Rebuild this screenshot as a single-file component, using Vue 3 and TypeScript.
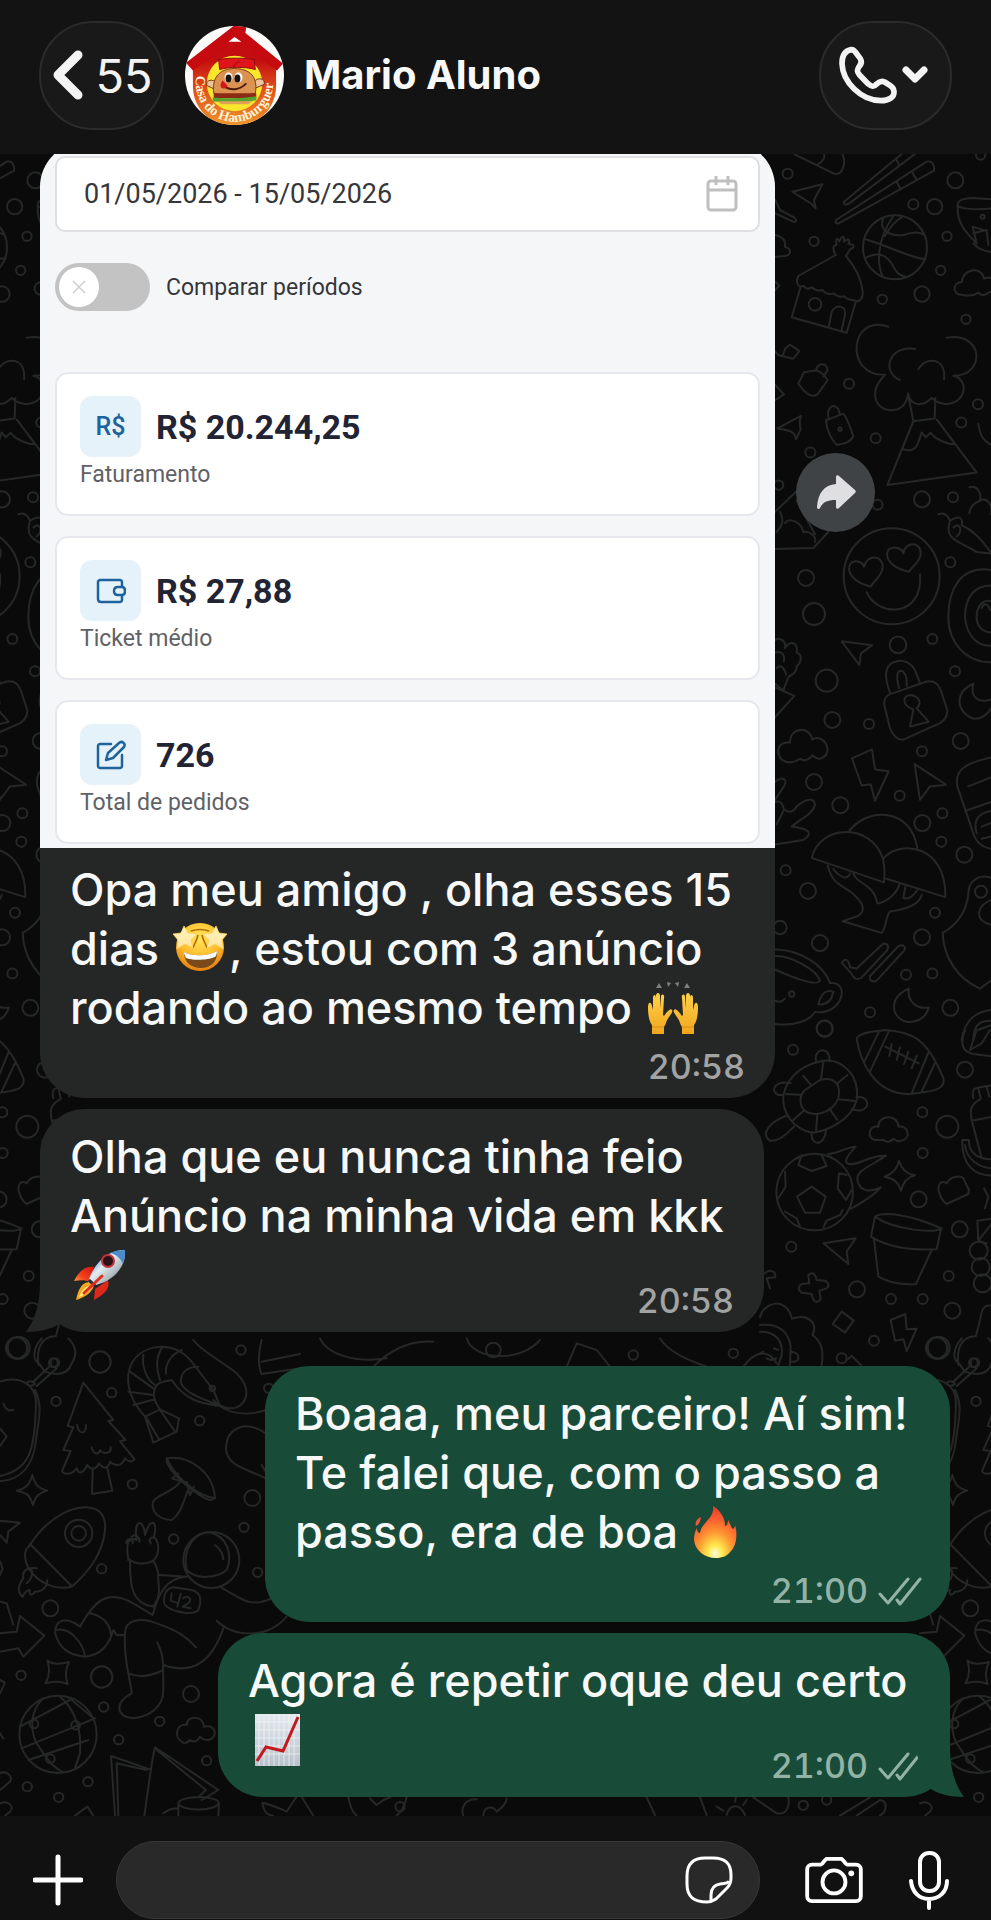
<script setup lang="ts">
import { ref } from 'vue'

interface Metric {
  icon: 'money' | 'wallet' | 'edit'
  value: string
  label: string
}

interface DoodleGroup {
  transform: string
  squash: number
  dots: [number, number, number][]
  lines: string[]
}

const contact = 'Mario Aluno'
const unread = 55
const period = ref('01/05/2026 - 15/05/2026')
const compare = ref(false)
const draft = ref('')

const metrics: Metric[] = [
  { icon: 'money', value: 'R$ 20.244,25', label: 'Faturamento' },
  { icon: 'wallet', value: 'R$ 27,88', label: 'Ticket médio' },
  { icon: 'edit', value: '726', label: 'Total de pedidos' },
]

/* The wallpaper repeats horizontally every 920px. */
const tiles = [-920, 0, 920, 1840]

const doodles: DoodleGroup[] = [
  {
    transform: 'translate(540 0) scale(.33333)',
    squash: 1,
    dots: [
      [743, 521, 15], [1120, 613, 15], [1184, 620, 23], [1246, 541, 24], [822, 724, 14], [1221, 709, 14],
      [1202, 811, 14], [1027, 898, 14], [1146, 882, 23], [1278, 958, 14], [1322, 465, 14], [1065, 742, 96],
      [825, 913, 19], [1328, 650, 6],
    ],
    lines: [
      'M762 462 L880 520 C905 530 918 495 910 470 C905 455 900 448 890 440 M832 494 C850 485 858 470 850 455',
      'M757 575 L847 553 L822 600 L827 625 L815 612 Z',
      'M1085 462 L912 605 C910 615 920 616 928 610 L1125 462 M1068 478 L1078 495',
      'M888 660 L1160 485 C1175 480 1185 495 1182 512 L896 670 C888 672 884 666 888 660 M1070 545 L1082 568 M1116 515 L1130 540',
      'M1030 655 C1015 690 1050 710 1090 705 C1120 695 1140 695 1152 705 M1060 648 C1010 720 1010 790 1028 830 M972 716 C1040 735 1100 770 1155 778 M975 775 C1020 750 1045 770 1060 800 C1070 820 1085 830 1100 830 M1085 652 C1060 665 1045 690 1035 708',
      'M887 765 L775 828 C765 850 775 862 790 858 C798 868 808 868 815 862 C825 872 840 872 848 870 C855 882 870 884 880 880 C890 890 905 892 912 888 C920 900 935 900 945 902 C960 910 970 890 968 875 C965 840 945 800 918 768',
      'M887 765 C875 745 880 735 890 735 C885 712 892 712 898 725 C905 705 915 708 912 725 C925 712 932 720 925 732 C945 732 945 742 930 748 L918 768',
      'M782 860 L755 952 L920 998 L948 903 M867 978 L875 935 C890 910 920 918 915 945 L905 990',
      'M706 600 L720 630 L762 652 C772 660 768 670 758 664 L706 640 M706 705 C740 715 735 730 735 740 C755 745 755 765 735 768 L706 770 M706 845 L718 857 L706 870',
      'M1253 620 C1250 600 1270 595 1300 594 L1390 600 M1253 620 C1250 670 1280 700 1310 730 M1256 620 C1290 632 1340 628 1380 622 M1310 730 L1298 680 L1330 690 M1300 700 L1340 690 L1345 735 M1300 730 C1320 755 1350 755 1380 760',
      'M1265 884 C1235 885 1238 845 1266 846 C1265 808 1325 795 1332 836 C1370 820 1380 870 1345 878 C1335 890 1320 885 1316 878 C1300 888 1280 888 1265 884 Z',
    ],
  },
  {
    transform: 'translate(760 340) scale(.33333 .44643)',
    squash: 0.747,
    dots: [
      [267, 98, 15], [240, 200, 5], [347, 220, 15], [151, 252, 15], [56, 325, 14], [353, 369, 15], [486, 357, 24],
      [579, 352, 15], [654, 144, 15], [604, 185, 15], [138, 533, 24], [162, 614, 33], [571, 498, 15], [517, 670, 15],
      [414, 683, 25], [200, 763, 33], [217, 851, 24], [327, 860, 15], [585, 742, 15], [602, 898, 24], [486, 921, 15],
      [162, 990, 24], [241, 1042, 24], [419, 1021, 15], [487, 1082, 24], [547, 1060, 15], [544, 1124, 15],
      [613, 1153, 24], [144, 1234, 24], [77, 1188, 15], [525, 1283, 15], [486, 1338, 24], [180, 1351, 24],
      [60, 1316, 20], [438, 1422, 15], [517, 1419, 15], [571, 1496, 24], [330, 1506, 15], [194, 1543, 24],
      [95, 1465, 8], [663, 1236, 18], [395, 529, 144],
    ],
    lines: [
      'M385 -30 C270 -60 250 80 375 78 C320 120 350 160 400 157 C430 155 440 140 444 120 C455 155 495 145 515 130 C560 160 620 135 610 100 C605 90 595 82 580 80 C680 80 670 -20 560 -5 M466 20 C390 10 360 70 420 90 M475 65 C500 35 560 40 552 88',
      'M444 120 L460 182 L524 176 L526 130 M460 182 L382 325 L650 297 L530 178 M430 245 C475 255 475 225 485 207 L497 218 L512 208 L525 218 C540 225 560 234 582 233',
      'M132 72 L170 68 C185 72 195 80 203 90 L172 122 C160 128 140 125 115 98 Z M170 68 C165 55 200 45 203 68 L190 82',
      'M198 180 L250 165 C262 175 270 195 280 215 C270 230 255 232 230 235 C212 220 200 200 198 180 M205 175 C200 150 220 140 235 155 L240 167',
      'M52 198 L123 170 C118 182 118 190 122 200 L108 222 C105 205 90 202 52 198 Z',
      'M45 25 C60 40 70 40 75 20 L90 10 L118 25 L100 42 L60 35 M45 100 L72 122 L45 135',
      'M45 385 L115 335 M60 385 C70 400 72 410 50 430 M75 410 C90 395 125 410 130 430 C150 428 170 440 165 452 M45 468 L160 466 L205 430 M110 360 L165 435',
      'M333 552 C285 545 255 520 272 500 C290 490 310 500 312 508 C320 480 370 480 368 510 C365 530 340 540 333 552 Z M447 519 C400 512 370 490 385 470 C405 458 430 470 430 478 C435 450 485 450 482 480 C478 500 455 508 447 519 Z M320 565 C350 620 490 625 480 525',
      'M655 188 C660 215 670 225 693 235 M628 330 C650 325 665 340 660 360 C640 365 630 375 628 388 M660 360 C680 350 700 370 693 390 M535 390 C555 385 565 395 570 405 C600 390 610 400 605 415 C650 430 670 455 693 475 M570 405 C550 450 600 450 650 475 L693 478 M580 420 C600 405 610 430 590 440',
      'M693 515 C600 505 565 560 565 620 C565 680 620 722 693 722 M693 550 C640 550 615 580 615 620 C620 670 660 685 693 685 M693 585 C665 580 648 600 650 625 C655 650 680 655 693 655 M665 600 C672 588 685 590 690 605',
      'M245 675 L336 684 L303 702 L298 728 Z',
      'M45 672 C60 665 80 675 75 690 C95 670 115 680 110 700 C130 705 122 725 110 730 C112 745 95 750 85 755 L70 785 L45 770 M45 700 C65 695 75 705 72 720 M50 735 C60 725 75 735 78 750 M45 778 L103 797 L45 845',
      'M372 815 C372 805 380 795 395 792 L500 765 C525 762 535 770 545 790 L562 830 C562 845 555 852 540 858 L430 895 C410 897 400 885 390 870 Z M390 790 C370 750 375 730 400 722 C430 712 455 725 465 740 L480 768 M417 780 C405 745 415 738 428 742 C440 750 440 760 440 775 M450 866 L460 828 C420 815 430 795 455 795 C480 800 485 815 470 825 L506 855 Z',
      'M640 770 C580 790 590 835 640 848 C670 850 685 835 693 825 M640 770 C630 800 655 815 693 805',
      'M65 940 C45 920 55 900 90 902 C90 865 150 865 157 895 C190 880 220 920 190 935 C180 940 165 938 158 930 C140 945 130 942 120 938 C100 948 80 948 65 940 Z',
      'M276 937 L336 917 L345 962 L386 966 L345 1032 L332 995 L305 998 Z',
      'M464 950 L558 996 L510 1000 L480 1030 Z',
      'M45 990 C70 975 85 985 70 1002 L45 1030 M45 1035 C60 1030 70 1040 72 1052 C90 1060 100 1058 110 1045 C140 1025 165 1025 165 1042 C155 1065 115 1075 95 1090 C150 1095 160 1105 130 1120 L45 1130 M72 1052 L50 1085',
      'M693 935 C600 950 585 970 592 1000 L640 1105 C650 1130 670 1135 693 1140 M625 1000 L693 980 M615 1055 L693 1035 M693 1055 C650 1060 640 1080 650 1105 M665 1090 L693 1082 M665 1117 L693 1112',
      'M155 1160 C180 1085 330 1080 368 1160 C375 1180 374 1200 372 1215 Z M265 1103 C310 1050 450 1040 472 1138 M372 1160 C420 1120 560 1130 556 1248 L372 1205 M203 1177 C215 1215 240 1220 270 1235 C310 1260 320 1275 295 1290 L248 1302 L365 1328 C380 1315 375 1295 390 1280 C450 1275 480 1260 485 1243 M220 1185 C240 1205 265 1210 270 1195 M280 1195 C290 1220 340 1215 352 1262 C380 1260 410 1240 418 1220 M436 1225 L430 1250 C450 1255 465 1240 472 1232',
      'M693 1205 C660 1195 625 1210 625 1240 C620 1280 590 1310 548 1328 C550 1380 590 1430 660 1453 L693 1435 M693 1255 C650 1265 640 1300 693 1310',
      'M245 1395 C255 1385 265 1385 270 1405 L290 1408 L370 1352 C385 1352 388 1360 380 1368 L305 1428 C290 1435 280 1430 275 1420 Z M330 1425 L415 1358 C430 1352 440 1360 432 1368 L350 1435 C338 1440 328 1435 330 1425 Z',
      'M447 1453 C390 1470 390 1510 430 1525 C470 1535 500 1515 506 1495 C470 1500 440 1480 447 1453 Z',
      'M45 1365 C120 1365 190 1400 210 1440 M45 1380 C90 1378 170 1410 180 1435 C170 1450 90 1425 45 1410 M210 1440 C245 1440 255 1460 235 1485 C215 1505 185 1508 165 1505 C150 1525 100 1538 45 1532 M175 1488 C185 1460 200 1455 220 1460 C215 1480 200 1490 175 1488 M45 1480 C60 1485 70 1480 75 1475',
      'M605 1568 C615 1520 650 1505 693 1500 M640 1568 C640 1530 665 1525 693 1525 M655 1545 L693 1535',
    ],
  },
  {
    transform: 'translate(760 1030) scale(.33333)',
    squash: 1,
    dots: [
      [99, 59, 15], [194, -5, 24], [615, 119, 24], [487, 247, 15], [562, 290, 33], [488, 369, 15], [476, 508, 24],
      [599, 598, 24], [94, 650, 15], [291, 778, 24], [393, 807, 15], [488, 807, 15], [566, 738, 15], [577, 842, 24],
      [342, 932, 15], [536, 953, 33], [656, 662, 27], [662, 711, 27], [668, 760, 27], [164, 486, 115], [245, 985, 15],
      [645, 998, 13],
    ],
    lines: [
      'M290 25 C300 5 350 5 375 0 C450 5 500 20 550 145 C560 185 500 185 445 192 C340 190 300 90 290 25 Z M357 5 L313 95 M386 5 L330 125 M505 68 L456 188 M527 95 L485 185 M376 50 L476 100 M395 42 L388 78 M420 52 L410 90 M445 65 L432 102 M470 78 L455 115',
      'M190 92 C250 85 300 140 290 210 C275 270 200 305 155 308 C100 295 65 250 70 195 C85 130 140 100 190 92 Z M180 150 C220 140 245 160 235 205 C220 240 185 258 150 250 C115 240 115 200 135 180 Z M190 95 L183 148 M130 138 L155 168 M78 192 L122 194 M100 270 L130 243 M168 305 L172 253 M232 270 L208 236 M285 213 L236 208 M262 135 L230 162',
      'M168 92 C160 50 215 50 208 94 M92 160 C50 150 25 180 55 195 L70 195 M78 258 C30 275 0 310 30 332 C60 335 80 310 102 290 M155 306 C150 350 195 350 198 300 M290 202 C325 195 335 235 300 242 L275 238',
      'M345 330 C320 325 325 285 355 290 C355 255 412 250 416 290 C445 285 455 325 425 332 C415 338 405 330 400 326 C390 340 375 335 370 330 Z',
      'M205 372 C240 370 260 350 287 350 C255 385 245 405 280 402 C310 398 330 375 378 377 C330 410 290 420 292 450 C300 490 335 485 362 472 C340 500 300 520 272 537',
      'M155 470 L197 500 L180 548 L135 548 L111 500 Z M125 375 L115 405 L155 423 L200 408 L185 375 M75 425 L77 470 L55 505 M260 435 L237 430 L233 475 L258 510 L275 480 M75 545 L110 565 L120 590 M190 592 L200 572 L240 555 L248 540',
      'M417 392 C425 420 440 432 465 436 C440 442 428 460 423 482 C415 455 400 445 374 440 C400 430 412 415 417 392 Z',
      'M535 480 C535 460 545 450 560 460 C570 440 600 435 610 445 L627 480 L625 492 L560 522 C548 515 540 500 535 480 Z',
      'M345 560 C370 545 440 550 545 595 C520 610 400 600 345 560 Z M345 560 L333 620 C380 650 450 662 530 658 L543 597 M342 628 L355 740 C390 760 430 765 468 762 L515 660',
      'M190 640 L287 625 L260 665 L265 702 Z',
      'M148 760 L145 735 C155 725 165 728 170 750 L195 752 C208 760 208 768 200 775 L178 782 L182 808 C172 820 160 820 155 792 L125 788 C112 778 115 768 125 762 Z',
      'M245 845 L281 872 L255 908 L218 882 Z',
      'M392 870 L436 852 L440 898 L470 896 L440 963 L430 928 L405 932 Z',
      'M0 862 C5 825 75 790 96 866 C140 850 175 875 158 915 C190 940 190 970 185 1005 M0 885 C50 880 85 900 92 950 L90 1005 M0 905 C45 905 70 930 65 975 L55 1005 M95 965 C125 970 120 1000 92 995 M20 985 C30 992 40 990 48 985 M0 970 L10 965 M42 955 L55 960 M260 990 L275 978 L303 1005',
      'M615 0 C600 40 605 65 640 72 L700 80 M650 0 L630 60 L665 40 L690 0 M640 205 C635 180 640 175 660 172 L700 165 M655 175 L662 205 M680 170 L688 200 M660 208 C630 225 630 240 635 270 L665 385 M635 272 L700 260 M607 330 L627 330 C625 365 650 390 700 388 M607 330 C605 400 640 440 700 436 M615 345 C620 390 660 415 700 415',
      'M700 565 L652 572 L655 632 L700 575 M655 632 L680 640 M700 828 C670 820 665 840 660 870 L648 918 C600 920 590 960 595 1005 M672 475 L685 500 L675 535 M14 730 C30 715 50 725 45 742 L20 745 L30 775',
    ],
  },
  {
    transform: 'translate(0 1340) scale(.33333)',
    squash: 1,
    dots: [
      [50, 24, 32], [300, 66, 32], [335, 158, 14], [168, 184, 14], [397, 433, 14], [599, 242, 14], [723, 30, 14],
      [757, 474, 24], [732, 562, 14], [773, 697, 14], [521, 597, 14], [305, 686, 14], [151, 805, 24], [63, 1006, 14],
      [305, 1011, 32], [311, 1101, 14], [479, 1144, 14], [573, 1062, 24], [356, 1199, 14], [620, 1262, 14],
      [82, 1340, 14], [176, 1372, 14], [264, 1325, 14], [160, 68, 13], [806, 145, 14], [236, 580, 41], [236, 580, 22],
      [634, 660, 84], [174, 1183, 116], [102, 1152, 13], [227, 1156, 13], [151, 1256, 13], [637, 145, 8],
      [1200, 1400, 14], [1480, 30, 22], [1900, 45, 14], [2410, 1396, 14], [2200, 40, 14], [2480, 1380, 14],
    ],
    lines: [
      'M125 -5 C95 30 100 60 115 68 L135 95 C180 110 205 100 215 70 C235 40 225 15 205 -5 M150 78 L100 125 M170 85 L110 138 M80 130 C85 120 100 122 105 132 C95 140 85 138 80 130',
      'M0 125 C60 105 110 135 108 190 C105 330 90 390 0 408 M105 150 C130 200 115 240 108 300 C100 380 60 420 0 424 M10 190 C20 215 30 212 40 210 M0 265 L20 290 L0 318',
      'M250 128 L340 240 L325 243 L377 300 L360 304 L404 358 C395 368 385 365 375 355 C365 380 345 380 330 365 C325 385 310 390 298 370 C290 385 275 395 262 375 C250 400 235 405 230 385 C215 405 190 405 186 393 L212 333 L190 330 L220 262 L203 258 Z M232 255 C235 285 260 285 258 255 M275 322 C280 345 298 345 300 330 C310 345 335 340 332 322 M278 392 L276 462 L337 452 L322 385',
      'M640 150 L575 65 C520 0 430 10 395 70 C375 110 380 170 435 230 L480 208 C450 170 460 130 490 125 L515 120 M515 120 C555 180 600 190 660 198 L640 150 M595 80 C565 80 545 90 542 125 C550 155 600 175 655 195 M545 30 C510 45 495 75 498 100 M485 25 C465 55 470 90 480 120 M430 45 C425 80 440 120 465 135 M390 95 L460 145 M385 155 L460 165 M400 195 L465 178 M435 230 L460 308 L530 275 L537 235 L480 208 M440 235 L478 300 M480 210 L525 275',
      'M580 0 C600 30 660 60 710 100 C760 150 740 205 690 205 C670 205 650 190 640 180 M655 195 C690 220 740 230 797 210 M785 0 C775 40 775 80 785 102 L900 85 M785 65 L900 42',
      'M797 280 C740 240 680 260 678 325 C680 380 740 385 797 415 M785 375 L797 395',
      'M97 405 C105 435 115 445 142 452 C115 460 105 470 99 496 C90 465 80 458 50 452 C80 445 90 430 97 405 Z',
      'M500 355 C560 345 640 390 645 475 C600 470 530 420 500 355 Z M500 355 C495 395 610 480 630 480 L645 475 M535 400 L517 415 L545 425 M560 425 L570 465 L582 440 M540 425 C520 460 450 465 458 500 C465 535 500 540 515 540 C545 520 550 480 565 450',
      'M90 615 C130 550 200 500 260 502 C310 505 325 540 310 600 C295 660 250 710 215 740 C130 760 60 680 78 630 Z M90 612 L215 738 M110 685 C85 680 65 690 70 715 C50 740 55 760 68 770 C75 755 80 750 90 750 C85 765 95 770 105 755 C125 755 140 745 142 720 M95 690 C100 710 90 720 80 730',
      'M0 542 L60 548 L25 575 L20 608 L0 585 M0 665 L8 685 L0 705 M0 785 L20 790 L40 855 M0 880 L50 875 L60 828 L133 887 L70 950 L55 925 L0 935 M0 1020 L15 1028 L0 1060 M0 1180 L10 1195',
      'M385 660 C375 600 390 590 410 600 C400 540 430 530 435 585 C450 530 475 540 462 590 C480 610 480 650 455 665 C430 675 400 672 385 655 M378 608 C385 590 400 600 398 610 M395 590 C405 580 420 590 418 605 M452 610 C442 595 460 585 470 600 M390 665 C390 740 395 790 460 800 C490 760 470 720 475 700 C470 680 465 670 460 665 M478 705 L560 710 M660 740 C740 790 760 800 815 775',
      'M555 710 C500 715 475 760 458 825 L400 790 C330 750 290 770 240 860 C200 830 165 835 165 880 C180 930 210 945 255 950 C300 945 325 920 340 870 L350 885 L372 885 M168 870 C210 860 250 910 255 950 M270 820 C320 830 340 870 330 900 M375 880 C375 840 420 830 470 850 C530 870 560 890 588 922 M375 880 C370 960 390 1010 395 1060 C340 1090 350 1130 400 1135 C450 1130 490 1100 490 1050 C490 960 490 940 472 908 M385 1000 C420 1015 460 1005 490 990 M490 975 C590 1010 640 950 670 865 M650 842 C700 890 800 900 860 830',
      'M560 690 C545 620 590 575 630 577 C680 590 700 640 680 690 C650 715 590 720 560 690 M645 615 C660 625 668 640 670 658 M520 742 C490 745 485 790 500 800 C530 820 580 825 595 810 C610 770 595 755 575 750 Z M515 760 L512 782 L535 790 M542 762 L532 800 M550 775 C560 765 580 775 565 790 L548 800 L572 805',
      'M142 962 C160 975 185 972 207 966 C195 990 195 1010 203 1032 C180 1022 160 1025 137 1029 C148 1010 150 985 142 962 Z',
      'M60 1160 L210 1080 M65 1225 L285 1135 M85 1260 L265 1200 M130 1075 C90 1110 85 1180 120 1225 C150 1270 165 1285 190 1297 M180 1070 C230 1110 245 1180 240 1240 L225 1285 M215 1080 L275 1130',
      'M545 1205 C520 1190 530 1150 560 1155 C560 1125 610 1125 612 1160 C650 1150 655 1195 625 1200 C610 1202 605 1195 600 1190 C590 1210 575 1205 570 1200 C560 1212 550 1210 545 1205 Z',
      'M345 1427 L333 1248 L450 1288 M355 1427 L350 1270 L440 1290 M433 1427 C440 1380 455 1260 465 1222 L655 1350 L605 1380 M470 1230 L618 1350 L595 1372 M535 1427 L535 1390 C540 1365 655 1365 657 1390 L655 1427 M535 1390 C545 1415 645 1415 655 1390 M490 1420 C500 1412 520 1405 535 1405 M225 1427 L262 1400 L280 1427 M0 1390 C25 1380 45 1400 30 1415 L15 1427 M0 1300 C20 1290 40 1310 30 1325 L0 1350',
      'M787 1388 C820 1395 840 1405 860 1415 L890 1370 M787 1388 C790 1410 800 1427 820 1427 M905 1370 L940 1427 M1045 1370 C1050 1400 1060 1420 1070 1427 M1110 1375 L1130 1395 L1150 1380 L1170 1372 M1220 1370 C1215 1400 1200 1420 1190 1427 M1390 1427 C1380 1400 1400 1375 1430 1378 M1450 1427 C1450 1400 1480 1395 1490 1415 C1510 1400 1520 1390 1520 1375',
      'M960 -5 C980 40 1060 70 1160 55 M1120 80 C1170 30 1230 0 1300 5 M1400 -5 C1420 60 1560 70 1620 0 M1700 80 L1730 10 L1790 30 L1830 80 M1980 -5 C2000 30 2060 60 2120 80 M2230 80 C2260 40 2300 20 2330 70',
      'M1940 1372 L1965 1425 M2100 1372 L2120 1425 M2180 1425 C2190 1390 2220 1390 2235 1425 M2150 1400 L2170 1412 M2205 1385 L2208 1370 M2230 1395 L2240 1380 M2260 1372 L2330 1420 C2360 1425 2370 1400 2365 1372 M2520 1427 L2610 1372 M2570 1427 L2640 1380 C2660 1380 2665 1410 2640 1427',
    ],
  },
]
</script>

<template>
  <div class="phone">
    <!-- Shared emoji and icon drawings -->
    <svg class="sprite" aria-hidden="true">
      <defs>
        <radialGradient id="gFace" cx=".5" cy=".3" r=".75">
          <stop offset="0" stop-color="#ffe65a" /><stop offset=".55" stop-color="#fdbd2c" /><stop offset="1" stop-color="#e2760a" />
        </radialGradient>
        <linearGradient id="gStar" x1="0" y1="0" x2="0" y2="1">
          <stop offset="0" stop-color="#fff6bd" /><stop offset="1" stop-color="#ffe3a0" />
        </linearGradient>
        <linearGradient id="gHand" x1="0" y1="0" x2="0" y2="1">
          <stop offset="0" stop-color="#ffd24a" /><stop offset="1" stop-color="#f0a51d" />
        </linearGradient>
        <linearGradient id="gBody" x1="0" y1="0" x2="1" y2="1">
          <stop offset=".15" stop-color="#3f84cc" /><stop offset=".42" stop-color="#e3edf2" /><stop offset=".68" stop-color="#aeb9bd" /><stop offset="1" stop-color="#55666f" />
        </linearGradient>
        <linearGradient id="gFin" x1="1" y1="0" x2="0" y2="1">
          <stop offset="0" stop-color="#d11414" /><stop offset=".6" stop-color="#f0411d" /><stop offset="1" stop-color="#ff9a3a" />
        </linearGradient>
        <radialGradient id="gFire" cx=".5" cy=".92" r=".85">
          <stop offset="0" stop-color="#fffbe0" /><stop offset=".2" stop-color="#ffe94e" /><stop offset=".48" stop-color="#ff9a32" /><stop offset=".8" stop-color="#fb5b30" /><stop offset="1" stop-color="#ea4429" />
        </radialGradient>
        <linearGradient id="gSheet" x1="0" y1="0" x2="0" y2="1">
          <stop offset="0" stop-color="#e4e9ee" /><stop offset="1" stop-color="#b9c2cb" />
        </linearGradient>
      </defs>

      <symbol id="emoji-star-struck" viewBox="0 0 56 52">
        <circle cx="28" cy="24" r="24" fill="url(#gFace)" />
        <path d="M19 8q9-3 18 0M26 12c-1 6-4 9-5 13M30 12c1 6 4 9 5 13" stroke="#b06a0c" stroke-width="1.6" fill="none" />
        <path d="M12 29c8 5 25 4 33-1 1 11-7 17-16 17S12 40 12 29Z" fill="#7a4a1b" />
        <path d="M12 29c8 5 25 4 33-1 0 3-1 5-2 6-7 3-22 4-29 1-1-2-2-4-2-6Z" fill="#fff" />
        <path d="M12 3l4 7 9 1-6 6 2 8-8-4-8 5 1-9-5-6 8-1Z" fill="url(#gStar)" stroke="#ffd25e" stroke-width=".8" />
        <path d="M44 3l-4 7-9 1 6 6-2 8 8-4 8 5-1-9 5-6-8-1Z" fill="url(#gStar)" stroke="#ffd25e" stroke-width=".8" />
      </symbol>

      <symbol id="emoji-hands" viewBox="0 0 56 52">
        <g fill="url(#gHand)">
          <path d="M7 52V43C4 39 3 33 3 25c0-5 3-6 4-1l1 4V16c0-4 3-4 3 0v10-12c0-4 4-4 4 0v12l1-11c0-4 4-3 3 1l-1 17 1 1c4-6 7-8 8-6 2 2-5 8-6 13-1 3-2 3-2 5v6Z" />
          <path d="M49 52V43c3-4 4-10 4-18 0-5-3-6-4-1l-1 4V16c0-4-3-4-3 0v10-12c0-4-4-4-4 0v12l-1-11c0-4-4-3-3 1l1 17-1 1c-4-6-7-8-8-6-2 2 5 8 6 13 1 3 2 3 2 5v6Z" />
        </g>
        <path d="M7 45h12M37 45h12" stroke="#d98d12" stroke-width="1" />
        <path d="M14 1l-3 5h6ZM22 0l1 5 3-4ZM34 0l-1 5-3-4ZM42 1l3 5h-6Z" fill="#7d7f80" />
      </symbol>

      <symbol id="emoji-rocket" viewBox="0 0 56 52">
        <path d="M23 18C14 17 8 22 3 32c7-1 12-1 16 1Z" fill="url(#gFin)" />
        <path d="M37 31c3 9-5 15-14 20l1-11Z" fill="#e0271b" />
        <path d="M18 33C9 34 7 43 5 51c7-2 15-6 18-14Z" fill="#f7a824" />
        <path d="M17 37c-5 3-7 6-9 11 6-2 9-5 12-9Z" fill="#fff27d" />
        <path d="M54 1C40 1 26 9 18 30l7 6C44 31 55 17 54 1Z" fill="url(#gBody)" />
        <path d="M54 1C48 1 43 2 39 4c6 1 11 6 13 11 2-4 2-9 2-14Z" fill="#4b8dcc" />
        <circle cx="37" cy="12" r="7" fill="#c5313a" />
        <circle cx="37" cy="12" r="5" fill="#2a1118" />
        <path d="M18 31l6 6" stroke="#1c2f42" stroke-width="3" />
        <path d="M31 27L13 44" stroke="#e52a1f" stroke-width="3" stroke-linecap="round" />
      </symbol>

      <symbol id="emoji-fire" viewBox="0 0 56 52">
        <path d="M22 0c8 5 12 12 12 20 2 0 3-3 3-6 3 5 3 8 5 9 1-1 2-2 2-4 3 10 1 21-4 26-4 5-8 7-15 7C13 52 4 44 3 34c0-5 1-9 3-12 0 3 1 5 3 5 1-6 4-8 7-12 4-4 7-9 6-15Z" fill="url(#gFire)" />
        <path d="M10 11c-5 3-6 5-5 9 4-2 4-5 5-9Z" fill="#f0583b" />
      </symbol>

      <symbol id="emoji-chart" viewBox="0 0 56 52">
        <path d="M6 0h45v52H6Z" fill="url(#gSheet)" />
        <path d="M10 0v52M15 0v52M20 0v52M25 0v52M30 0v52M35 0v52M40 0v52M45 0v52M6 8h45M6 16h45M6 24h45M6 32h45M6 40h45" stroke="#f4f7f9" stroke-width=".7" />
        <path d="M8 47l9-14 17 4L49 3" fill="none" stroke="#c3181d" stroke-width="3" />
      </symbol>

      <symbol id="icon-ticks" viewBox="0 0 44 30">
        <path d="M2 18l8 9L30 3M19 24l3 4L42 3" fill="none" stroke="currentColor" stroke-width="3" stroke-linecap="round" stroke-linejoin="round" />
      </symbol>

      <symbol id="icon-tail" viewBox="0 0 50 50">
        <path d="M14 0C14 22 9 38 0 50C14 50 26 47 35 41L50 0Z" fill="currentColor" />
      </symbol>
    </svg>

    <header class="topbar">
      <button class="pill back" type="button" aria-label="Voltar">
        <svg width="32" height="52" viewBox="0 0 32 52" aria-hidden="true">
          <path d="M26 6L6 26l20 20" fill="none" stroke="#f3f3f3" stroke-width="9" stroke-linecap="round" stroke-linejoin="round" />
        </svg>
        <span>{{ unread }}</span>
      </button>

      <svg class="avatar" viewBox="0 0 100 100" role="img" aria-label="Casa do Hamburguer">
        <defs>
          <clipPath id="avatarClip"><circle cx="50" cy="50" r="50" /></clipPath>
          <linearGradient id="gRing" x1="0" y1="0" x2="0" y2="1">
            <stop offset=".25" stop-color="#c30d10" /><stop offset=".55" stop-color="#dd4a1a" /><stop offset="1" stop-color="#f0962b" />
          </linearGradient>
          <path id="ringText" d="M12 49A39 39 0 1 0 88 49" />
        </defs>
        <g clip-path="url(#avatarClip)">
          <rect width="100" height="100" fill="#fdfcfb" />
          <path d="M8 44L50 12 92 44V60C92 84 74 101 50 101S8 84 8 60Z" fill="url(#gRing)" />
          <path d="M1 37L49 0h13l-1 7 38 31-6 7-8-5-35-26L15 40l-7 5Z" fill="#c50b10" />
          <path d="M44 16l6-5 7 5Z" fill="#fff" />
          <circle cx="50" cy="58" r="28" fill="#fae72c" />
          <path d="M31 56c-6-3-10 0-9 4l10 5M71 55c6-4 10 0 9 4l-12 5" fill="#f0c49a" stroke="#6b3a1c" stroke-width="1" />
          <path d="M29 68c-2-15 5-25 21-25s24 9 21 25c-12 3-30 3-42 0Z" fill="#dc9250" stroke="#7a3e16" stroke-width="1" />
          <path d="M34 34c8-2 28-2 36 0l1 10c-10-3-26-3-36 0Z" fill="#e0141a" stroke="#8b0b0e" stroke-width="1" />
          <path d="M49 42c1-4 3-5 6-6" fill="none" stroke="#8b0b0e" stroke-width="1" />
          <ellipse cx="44" cy="52" rx="4" ry="5" fill="#fff" /><ellipse cx="54" cy="52" rx="4" ry="5" fill="#fff" />
          <ellipse cx="44" cy="53" rx="3" ry="4" fill="#161313" /><ellipse cx="53" cy="53" rx="3" ry="4" fill="#161313" />
          <path d="M38 60c8 6 17 5 24-2" fill="none" stroke="#4d1c0c" stroke-width="2" />
          <path d="M38 55c-4 5-2 9 3 8l2-3Z" fill="#d8151d" />
          <path d="M29 68h43v5H29Z" fill="#8d2a16" />
          <path d="M28 72c12 2 32 1 44-1v4c-12 3-32 3-44 1Z" fill="#55a331" />
          <path d="M32 76h36l-4 3H37Z" fill="#e2a058" />
        </g>
        <text class="ring"><textPath href="#ringText" startOffset="1">Casa do Hamburguer</textPath></text>
      </svg>

      <h1 class="name">{{ contact }}</h1>

      <button class="pill call" type="button" aria-label="Ligar">
        <svg width="60" height="60" viewBox="893 139 180 180" aria-hidden="true">
          <path d="M933 153C914 156 905 172 905 195C907 250 962 306 1022 306C1047 306 1062 294 1061 280C1061 270 1058 266 1050 261L1033 250C1023 245 1017 248 1009 256C1000 266 995 264 983 255L957 228C949 218 950 215 956 204C965 195 965 188 960 180L945 160C941 155 938 153 933 153Z" fill="none" stroke="#f3f3f3" stroke-width="17" stroke-linejoin="round" />
        </svg>
        <svg width="26" height="20" viewBox="0 0 26 20" aria-hidden="true">
          <path d="M4 5l9 9 9-9" fill="none" stroke="#f3f3f3" stroke-width="7" stroke-linecap="round" stroke-linejoin="round" />
        </svg>
      </button>
    </header>

    <main class="chat">
      <svg class="wallpaper" aria-hidden="true">
        <defs>
          <g id="doodles" fill="none" stroke="#262727" stroke-width="2" stroke-linejoin="round" stroke-linecap="round">
            <g v-for="(g, gi) in doodles" :key="gi" :transform="g.transform">
              <ellipse v-for="(d, di) in g.dots" :key="'d' + di" :cx="d[0]" :cy="d[1]" :rx="d[2]" :ry="d[2] * g.squash" vector-effect="non-scaling-stroke" />
              <path v-for="(p, pi) in g.lines" :key="'p' + pi" :d="p" vector-effect="non-scaling-stroke" />
            </g>
          </g>
        </defs>
        <use v-for="x in tiles" :key="x" href="#doodles" :x="x" y="-154" />
      </svg>

      <article class="bubble received with-media">
        <div class="media-wrap">
          <section class="media">
            <div class="date">
              <input v-model="period" type="text" aria-label="Período" readonly />
              <svg width="32" height="36" viewBox="0 0 32 36" fill="none" stroke="#bfbfbf" stroke-width="3" aria-hidden="true">
                <rect x="2" y="5" width="28" height="29" rx="3" /><path d="M2 14h28M10 0v9M22 0v9" />
              </svg>
            </div>
            <label class="compare">
              <span class="switch">
                <input v-model="compare" type="checkbox" />
                <svg viewBox="0 0 14 14" aria-hidden="true"><path d="M1 1l12 12M13 1L1 13" stroke="#cfcfcf" stroke-width="1.5" /></svg>
              </span>
              Comparar períodos
            </label>
            <div class="cards">
              <div v-for="m in metrics" :key="m.label" class="card">
                <div class="figure">
                  <span class="tile">
                    <span v-if="m.icon === 'money'">R$</span>
                    <svg v-else-if="m.icon === 'wallet'" width="30" height="26" viewBox="0 0 30 26" fill="none" stroke="#1f639c" stroke-width="2.5" stroke-linejoin="round" aria-hidden="true">
                      <path d="M26 8V4c0-1-1-2-2-2H4C3 2 2 3 2 4v17c0 2 1 3 3 3h19c1 0 2-1 2-2v-4" />
                      <path d="M22 9h4c2 0 3 2 3 4s-1 4-3 4h-4c-3 0-4-2-4-4s1-4 4-4Z" />
                    </svg>
                    <svg v-else width="30" height="30" viewBox="0 0 30 30" fill="none" stroke="#1f639c" stroke-width="2.5" stroke-linejoin="round" stroke-linecap="round" aria-hidden="true">
                      <path d="M15 4H4C3 4 2 5 2 6v20c0 1 1 2 2 2h20c1 0 2-1 2-2V15" />
                      <path d="M10 20l2-7L23 3c3-3 7 1 5 4L17 18Z" />
                    </svg>
                  </span>
                  <strong>{{ m.value }}</strong>
                </div>
                <span class="caption">{{ m.label }}</span>
              </div>
            </div>
          </section>
          <button class="forward" type="button" aria-label="Encaminhar">
            <svg width="40" height="36" viewBox="0 0 40 36" aria-hidden="true">
              <path d="M20 2c0-2 2-2 3-1l16 14c1 1 1 2 0 3L23 33c-1 1-3 1-3-1v-7C11 25 7 27 4 33c-1 2-3 1-3-1C2 18 8 10 20 9Z" fill="#dfdfe1" />
            </svg>
          </button>
        </div>
        <p>Opa meu amigo , olha esses 15 dias <svg class="emoji" role="img" aria-label="🤩"><use href="#emoji-star-struck" /></svg>, estou com 3 anúncio rodando ao mesmo tempo <svg class="emoji" role="img" aria-label="🙌"><use href="#emoji-hands" /></svg></p>
        <div class="meta"><time>20:58</time></div>
      </article>

      <article class="bubble received second">
        <svg class="tail" aria-hidden="true"><use href="#icon-tail" /></svg>
        <p>Olha que eu nunca tinha feio Anúncio na minha vida em kkk <svg class="emoji" role="img" aria-label="🚀"><use href="#emoji-rocket" /></svg></p>
        <div class="meta tucked"><time>20:58</time></div>
      </article>

      <article class="bubble sent third">
        <p>Boaaa, meu parceiro! Aí sim! Te falei que, com o passo a passo, era de boa <svg class="emoji" role="img" aria-label="🔥"><use href="#emoji-fire" /></svg></p>
        <div class="meta"><time>21:00</time><svg class="ticks" role="img" aria-label="Entregue"><use href="#icon-ticks" /></svg></div>
      </article>

      <article class="bubble sent fourth">
        <svg class="tail" aria-hidden="true"><use href="#icon-tail" /></svg>
        <p>Agora é repetir oque deu certo <svg class="emoji" role="img" aria-label="📈"><use href="#emoji-chart" /></svg></p>
        <div class="meta tucked"><time>21:00</time><svg class="ticks" role="img" aria-label="Entregue"><use href="#icon-ticks" /></svg></div>
      </article>
    </main>

    <footer class="composer">
      <button type="button" aria-label="Anexar">
        <svg width="50" height="52" viewBox="0 0 50 52" aria-hidden="true"><path d="M25 3v46M2 26h46" stroke="#fff" stroke-width="5" stroke-linecap="round" /></svg>
      </button>
      <div class="field">
        <input v-model="draft" type="text" aria-label="Mensagem" />
        <button type="button" aria-label="Figurinhas">
          <svg width="48" height="48" viewBox="0 0 48 48" fill="none" stroke="#fff" stroke-width="3" stroke-linejoin="round" aria-hidden="true">
            <path d="M20 2h8c13 0 18 6 18 17v3c0 4-1 7-4 10L31 43c-3 2-6 3-9 3C8 46 2 40 2 28v-8C2 8 8 2 20 2Z" />
            <path d="M26 46v-7c0-7 3-10 9-11 4-1 8 0 9-3" />
          </svg>
        </button>
      </div>
      <div class="actions">
        <button type="button" aria-label="Câmera">
          <svg width="58" height="46" viewBox="0 0 60 48" fill="none" stroke="#fff" stroke-width="4" stroke-linejoin="round" aria-hidden="true">
            <path d="M7 8h9c2 0 4-5 6-6h16c2 1 4 6 6 6h9c3 0 5 2 5 5v28c0 3-2 5-5 5H7c-3 0-5-2-5-5V13c0-3 2-5 5-5Z" />
            <circle cx="30" cy="26" r="12" /><circle cx="48" cy="17" r="3" fill="#fff" stroke="none" />
          </svg>
        </button>
        <button type="button" aria-label="Gravar áudio">
          <svg width="40" height="60" viewBox="0 0 40 60" fill="none" stroke="#fff" stroke-width="4" stroke-linecap="round" aria-hidden="true">
            <rect x="11" y="3" width="19" height="38" rx="9" /><path d="M2 31c1 11 8 18 18 18s18-7 18-18M20 50v8" />
          </svg>
        </button>
      </div>
    </footer>
  </div>
</template>

<style>
body {
  background: #0a0a0a;
}
</style>

<style scoped>
.phone {
  display: flex;
  flex-direction: column;
  min-height: 100vh;
  font-family: Inter, 'Liberation Sans', sans-serif;
  color: #f7f8f8;
  overflow: hidden;
}

.sprite {
  position: absolute;
  width: 0;
  height: 0;
}

button {
  padding: 0;
  border: 0;
  background: none;
  color: inherit;
  font: inherit;
  cursor: pointer;
}

button svg {
  display: block;
}

.topbar {
  display: flex;
  align-items: center;
  box-sizing: border-box;
  height: 154px;
  padding: 0 39px 4px;
  background: #131313;
}

.pill {
  display: flex;
  align-items: center;
  justify-content: center;
  box-sizing: border-box;
  height: 109px;
  border: 2px solid #2b2b2b;
  border-radius: 54px;
  background: #191919;
}

.back {
  width: 125px;
  padding-left: 2px;
  gap: 11px;
  font-size: 47px;
  color: #f3f3f3;
}

.avatar {
  width: 99px;
  height: 99px;
  margin: 0 20px 0 21px;
}

.ring {
  font: bold 14px 'Liberation Serif', serif;
  fill: #fdf3d8;
}

.name {
  margin: 0;
  font-size: 40px;
  font-weight: 700;
  line-height: 48px;
}

.call {
  width: 133px;
  margin-left: auto;
  padding-right: 6px;
  gap: 4px;
}

.chat {
  position: relative;
  display: flex;
  flex: 1;
  flex-direction: column;
  align-items: flex-start;
  padding: 0 41px 19px 40px;
  background: #0a0a0a;
  overflow: hidden;
}

.wallpaper {
  position: absolute;
  inset: 0;
  width: 100%;
  height: 100%;
}

.bubble {
  position: relative;
  display: flex;
  flex-direction: column;
  box-sizing: border-box;
  max-width: 100%;
  padding: 18px 30px 11px;
  border-radius: 45px;
}

.received {
  background: #252726;
}

.sent {
  align-self: flex-end;
  background: #184c39;
}

.with-media {
  width: 735px;
  margin-top: -12px;
  padding-top: 0;
}

.second {
  width: 724px;
  margin-top: 11px;
}

.third {
  width: 685px;
  margin-top: 34px;
}

.fourth {
  width: 732px;
  margin-top: 11px;
}

.bubble p {
  margin: 0;
  font-size: 45px;
  font-weight: 500;
  line-height: 59px;
}

.emoji {
  width: 56px;
  height: 52px;
  margin: 0 1px;
  vertical-align: -10px;
}

.meta {
  display: flex;
  align-items: center;
  justify-content: flex-end;
  gap: 10px;
  height: 40px;
  margin-top: 10px;
  font-size: 34px;
  font-weight: 500;
  font-variant-numeric: tabular-nums;
  line-height: 40px;
  color: #a2a4a3;
}

.sent .meta {
  margin-right: -2px;
  color: #93b3a6;
}

.meta.tucked {
  margin-top: -23px;
}

.ticks {
  width: 44px;
  height: 30px;
}

.tail {
  position: absolute;
  bottom: 0;
  width: 50px;
  height: 50px;
}

.received .tail {
  left: -14px;
  color: #252726;
}

.sent .tail {
  right: -14px;
  color: #184c39;
  transform: scaleX(-1);
}

.media-wrap {
  position: relative;
  margin: 0 -30px 12px;
}

.media {
  padding: 14px 15px 4px;
  border-radius: 45px 45px 0 0;
  background: #f5f6f8;
  font-family: Roboto, sans-serif;
  color: #35363a;
}

.date {
  display: flex;
  align-items: center;
  box-sizing: border-box;
  height: 76px;
  padding: 0 20px 0 27px;
  border: 2px solid #dedfe3;
  border-radius: 10px;
  background: #fff;
}

.date input {
  flex: 1;
  min-width: 0;
  padding: 0;
  border: 0;
  outline: 0;
  background: none;
  color: #37373a;
  font: 27px Roboto, sans-serif;
}

.compare {
  display: flex;
  align-items: center;
  gap: 16px;
  margin: 31px 0 61px;
  font-size: 23px;
}

.switch {
  position: relative;
  width: 95px;
  height: 48px;
}

.switch input {
  display: flex;
  align-items: center;
  width: 100%;
  height: 100%;
  margin: 0;
  padding: 0 4px;
  box-sizing: border-box;
  appearance: none;
  border-radius: 24px;
  background: #c3c3c3;
}

.switch input::before {
  content: '';
  width: 40px;
  height: 40px;
  border-radius: 50%;
  background: #fff;
}

.switch svg {
  position: absolute;
  top: 17px;
  left: 17px;
  width: 14px;
  height: 14px;
}

.cards {
  display: grid;
  gap: 20px;
}

.card {
  box-sizing: border-box;
  height: 144px;
  padding: 22px 23px;
  border: 2px solid #e6e8ee;
  border-radius: 13px;
  background: #fff;
}

.figure {
  display: flex;
  align-items: center;
  gap: 15px;
}

.tile {
  display: flex;
  align-items: center;
  justify-content: center;
  width: 61px;
  height: 61px;
  border-radius: 12px;
  background: #e6f2fa;
  color: #1f639c;
  font-size: 25px;
  font-weight: 500;
}

.figure strong {
  color: #222433;
  font-size: 34px;
  font-weight: 700;
}

.caption {
  display: block;
  margin-top: 4px;
  color: #5f6166;
  font-size: 23px;
  line-height: 28px;
}

.forward {
  position: absolute;
  top: 50%;
  left: 100%;
  display: flex;
  align-items: center;
  justify-content: center;
  width: 79px;
  height: 79px;
  margin: -42px 0 0 21px;
  border-radius: 50%;
  background: #404345;
}

.composer {
  display: flex;
  align-items: center;
  padding: 25px 42px 1px 33px;
  background: #111;
}

.field {
  display: flex;
  flex: 1;
  align-items: center;
  box-sizing: border-box;
  min-width: 0;
  height: 78px;
  margin: 0 45px 0 33px;
  padding: 0 26px 0 36px;
  border: 1px solid #383838;
  border-radius: 39px;
  background: #292929;
}

.field input {
  flex: 1;
  min-width: 0;
  border: 0;
  outline: 0;
  background: none;
  color: #f7f8f8;
  font: 36px Inter, sans-serif;
}

.actions {
  display: flex;
  align-items: center;
  gap: 46px;
}
</style>
